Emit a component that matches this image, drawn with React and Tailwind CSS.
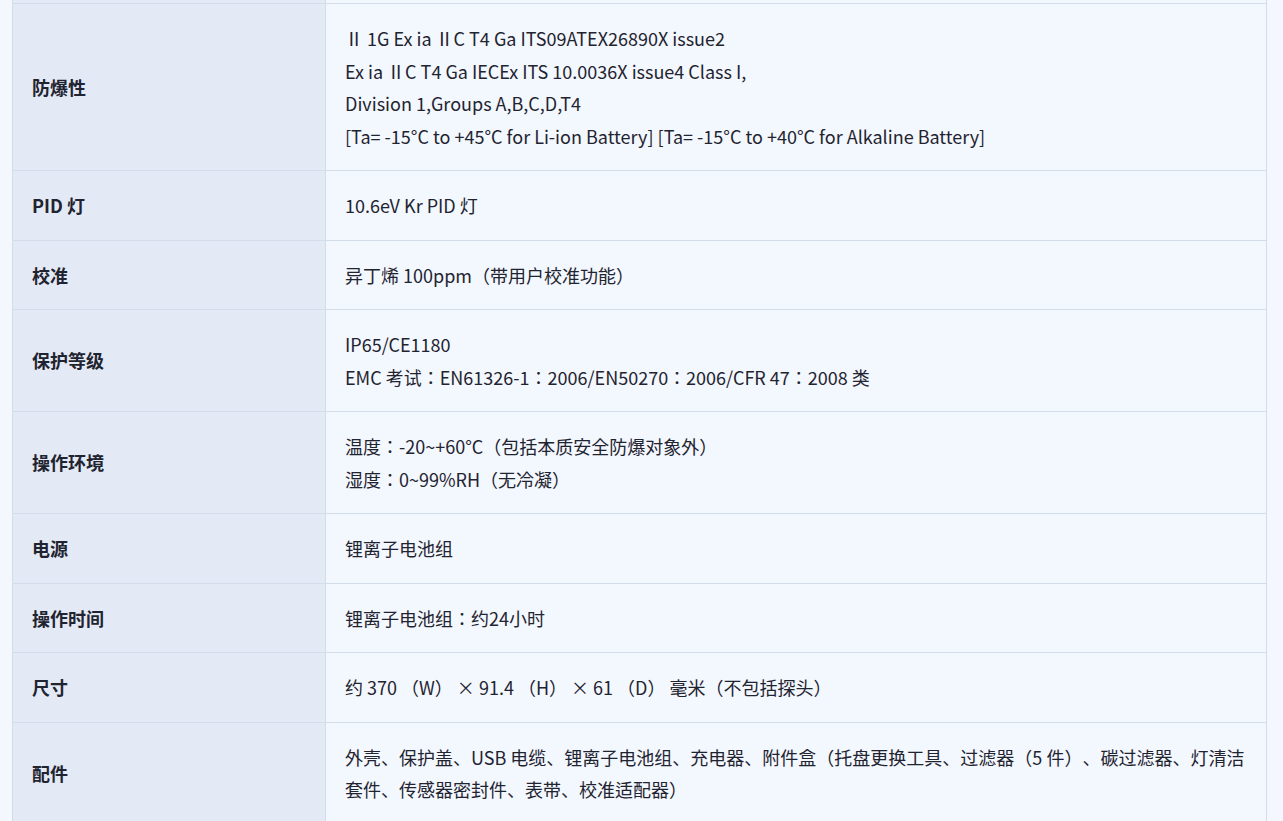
import React from "react";

// Spec rows: label on the left, one or more lines on the right
const SPECS = [
  {
    label: "防爆性",
    lines: [
      "Ⅱ 1G Ex ia ⅡC T4 Ga ITS09ATEX26890X issue2",
      "Ex ia ⅡC T4 Ga IECEx ITS 10.0036X issue4 Class I,",
      "Division 1,Groups A,B,C,D,T4",
      "[Ta= -15°C to +45°C for Li-ion Battery] [Ta= -15°C to +40°C for Alkaline Battery]",
    ],
  },
  { label: "PID 灯", lines: ["10.6eV Kr PID 灯"] },
  { label: "校准", lines: ["异丁烯 100ppm（带用户校准功能）"] },
  {
    label: "保护等级",
    lines: ["IP65/CE1180", "EMC 考试：EN61326-1：2006/EN50270：2006/CFR 47：2008 类"],
  },
  {
    label: "操作环境",
    lines: ["温度：-20~+60°C（包括本质安全防爆对象外）", "湿度：0~99%RH（无冷凝）"],
  },
  { label: "电源", lines: ["锂离子电池组"] },
  { label: "操作时间", lines: ["锂离子电池组：约24小时"] },
  { label: "尺寸", lines: ["约 370 （W） × 91.4 （H） × 61 （D） 毫米（不包括探头）"] },
  {
    label: "配件",
    lines: [
      "外壳、保护盖、USB 电缆、锂离子电池组、充电器、附件盒（托盘更换工具、过滤器（5 件）、碳过滤器、灯清洁套件、传感器密封件、表带、校准适配器）",
    ],
  },
];

const SpecRow = ({ spec }) => (
  <div className="flex border-b border-[#d3dde9]">
    <div className="flex w-[313px] shrink-0 items-center border-r border-[#d3dde9] bg-[#e3eaf5] pl-[19px] font-bold">
      {spec.label}
    </div>
    <div className="flex-1 bg-[#f3f7fe] px-[19px] py-[18px]">
      {spec.lines.map((line, i) => (
        <p key={i}>{line}</p>
      ))}
    </div>
  </div>
);

const App = () => {
  return (
    <div
      className="min-h-screen bg-[#f4f7fd] pl-[12px] text-[18px] leading-[32.5px] text-[#1f2430] [text-spacing-trim:space-all]"
      style={{ fontFamily: '"Noto Sans CJK JP", "Noto Sans CJK SC", "Noto Sans", sans-serif' }}
    >
      <div className="w-[1255px] border-x border-[#d3dde9]">
        {/* tail of the row above, scrolled out of view */}
        <div className="flex h-[4px] border-b border-[#d3dde9]">
          <div className="w-[313px] border-r border-[#d3dde9] bg-[#e3eaf5]" />
          <div className="flex-1 bg-[#f3f7fe]" />
        </div>
        {SPECS.map((spec) => (
          <SpecRow key={spec.label} spec={spec} />
        ))}
      </div>
    </div>
  );
};

export default App;
